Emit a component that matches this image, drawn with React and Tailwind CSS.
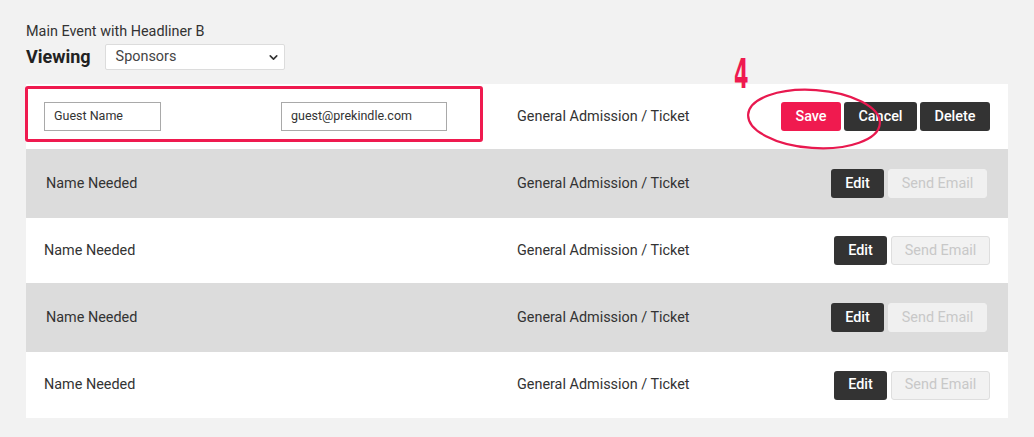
import { ChevronDown } from "lucide-react";

const rows = [
  { gray: true, h: "h-[69px]" },
  { gray: false, h: "h-[65px]" },
  { gray: true, h: "h-[69px]" },
  { gray: false, h: "h-[66px]" },
];

function DarkButton({ children, className = "" }) {
  return (
    <button
      className={`h-[29px] rounded-[3px] bg-[#333333] text-white text-[14.4px] font-medium ${className}`}
    >
      {children}
    </button>
  );
}

export default function App() {
  return (
    <div
      className="h-[437px] w-full bg-[#f2f2f2] px-[26px] pt-[22px] text-[#333333]"
      style={{ fontFamily: "Roboto, 'Liberation Sans', sans-serif" }}
    >
      {/* Header */}
      <div className="text-[14.4px] leading-[20px]">Main Event with Headliner B</div>
      <div className="mt-[2px] flex items-center">
        <span className="text-[18px] font-bold leading-[26px] text-[#222222]">Viewing</span>
        <div className="ml-[14px] flex h-[26px] w-[180px] items-center justify-between rounded-[2px] border border-[#dcdcdc] bg-white pl-[10px] pr-[4px] text-[14.4px] text-[#444444]">
          <span>Sponsors</span>
          <ChevronDown className="h-[13px] w-[13px] text-[#333333]" strokeWidth={3} />
        </div>
      </div>

      {/* Table */}
      <div className="relative mt-[14px] w-[982px]">
        {/* Editing row */}
        <div className="flex h-[65px] items-center bg-white pl-[18px] pr-[18px] text-[14.4px]">
          <div className="flex w-[473px] items-center">
            <div className="flex h-[29px] w-[117px] items-center border border-[#a9a9a9] px-[9px] text-[12.5px] text-[#333333]">
              Guest Name
            </div>
            <div className="ml-[120px] flex h-[29px] w-[166px] items-center border border-[#a9a9a9] px-[9px] text-[12.5px] text-[#333333]">
              guest@prekindle.com
            </div>
          </div>
          <span>General Admission / Ticket</span>
          <div className="ml-auto flex items-center gap-[3px]">
            <button className="h-[29px] w-[60px] rounded-[3px] bg-[#f01a4f] text-[14.4px] font-medium text-white">
              Save
            </button>
            <DarkButton className="w-[73px]">Cancel</DarkButton>
            <DarkButton className="w-[70px]">Delete</DarkButton>
          </div>
        </div>

        {rows.map((r, i) => (
          <div
            key={i}
            className={`flex ${r.h} items-center text-[14.4px] ${
              r.gray ? "bg-[#dcdcdc] pl-[20px] pr-[21px]" : "bg-white pl-[18px] pr-[18px]"
            }`}
          >
            <span className={r.gray ? "w-[471px]" : "w-[473px]"}>Name Needed</span>
            <span>General Admission / Ticket</span>
            <div className="ml-auto flex items-center gap-[4px]">
              <DarkButton className="w-[53px]">Edit</DarkButton>
              <button
                className={`h-[29px] w-[99px] rounded-[3px] border text-[14.4px] text-[#c8c8c8] ${
                  r.gray ? "border-[#f0f0f0] bg-[#f0f0f0]" : "border-[#dedede] bg-[#f2f2f2]"
                }`}
              >
                Send Email
              </button>
            </div>
          </div>
        ))}

        {/* Annotation: red box around inputs */}
        <div className="pointer-events-none absolute left-[-1px] top-[2px] h-[56px] w-[458px] rounded-[3px] border-[3px] border-[#ef1a4f]" />

        {/* Annotation: step number */}
        <div
          className="pointer-events-none absolute left-[708px] top-[-32px] origin-left scale-x-[0.58] text-[40px] font-bold leading-[44px] text-[#ef1a4f]"
          style={{ fontFamily: "'DejaVu Sans Condensed', 'DejaVu Sans', sans-serif" }}
        >
          4
        </div>

        {/* Annotation: ellipse around Save */}
        <svg
          className="pointer-events-none absolute left-[719px] top-[3px]"
          width="138"
          height="64"
          viewBox="0 0 138 64"
        >
          <ellipse
            cx="69"
            cy="32"
            rx="66"
            ry="29"
            transform="rotate(4 69 32)"
            fill="none"
            stroke="#e8194f"
            strokeWidth="2.2"
          />
        </svg>
      </div>
    </div>
  );
}
